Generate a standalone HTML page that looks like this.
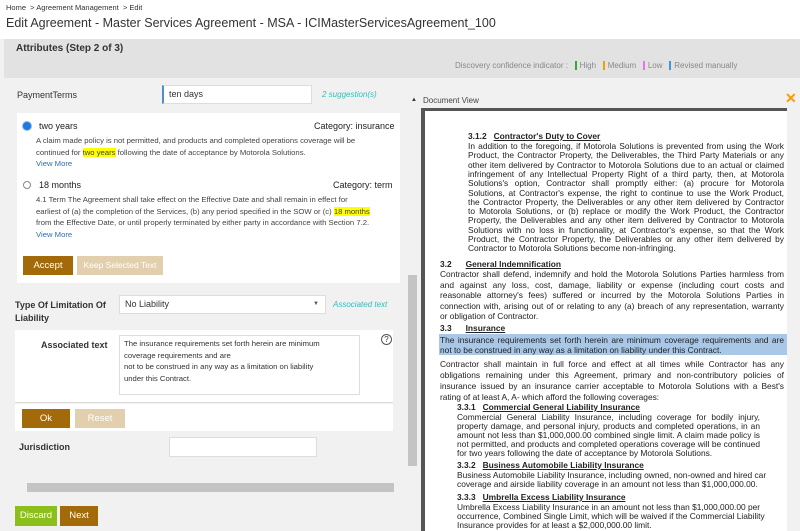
<!DOCTYPE html>
<html><head><style>
*{box-sizing:border-box;margin:0;padding:0}
html,body{width:800px;height:531px;overflow:hidden}
body{background:#f1f1f1;font-family:"Liberation Sans",sans-serif;color:#333;position:relative;font-size:10px}
.a{position:absolute}
.btn{position:absolute;color:#fff;font-size:9.5px;text-align:center;line-height:19px;height:19px}
.l{position:absolute;font-size:8.4px;line-height:10px;height:10px;color:#222;text-align:justify;text-align-last:justify;white-space:nowrap;overflow:visible}
.e{text-align-last:left}
.w1{left:468px;width:316px}
.w2{left:440px;width:344px}
.w3{left:457px;width:303px}
.hd{font-weight:bold;text-align-last:left}
.u{text-decoration:underline}
.hl{background:#ff0}
.s{white-space:nowrap;font-size:7.7px;line-height:11.7px;color:#444}
</style></head><body>
<div class="a" style="left:0;top:0;width:800px;height:39px;background:#fff"></div>
<div class="a" style="left:6px;top:3px;font-size:7.5px;color:#333">Home &nbsp;&gt; Agreement Management &nbsp;&gt; Edit</div>
<div class="a" style="left:6px;top:16px;font-size:12.5px;color:#333">Edit Agreement - Master Services Agreement - MSA - ICIMasterServicesAgreement_100</div>
<div class="a" style="left:4px;top:39px;width:796px;height:39px;background:#e2e2e2"></div>
<div class="a" style="left:16px;top:43px;font-size:10px;font-weight:bold;color:#333">Attributes (Step 2 of 3)</div>
<div class="a" style="left:455px;top:61px;font-size:8px;color:#888;white-space:nowrap">Discovery confidence indicator : &nbsp;&nbsp;<span style="border-left:2px solid #3a3;padding-left:3px">High</span> &nbsp;&nbsp;<span style="border-left:2px solid #f90;padding-left:3px">Medium</span> &nbsp;&nbsp;<span style="border-left:2px solid #f6f;padding-left:3px">Low</span> &nbsp;&nbsp;<span style="border-left:2px solid #39e;padding-left:3px">Revised manually</span></div>

<div class="a" style="left:17px;top:90px;font-size:9px;color:#333">PaymentTerms</div>
<div class="a" style="left:162px;top:85px;width:150px;height:19px;background:#fff;border:1px solid #ddd;border-left:2px solid #4a8fd0;font-size:9px;padding:3px 5px">ten days</div>
<div class="a" style="left:322px;top:90px;font-size:8px;color:#3bb;font-style:italic">2 suggestion(s)</div>

<div class="a" style="left:17px;top:113px;width:383px;height:170px;background:#fff"></div>
<div class="a" style="left:23px;top:122px;width:8px;height:8px;border-radius:50%;background:#1e7ae0;box-shadow:0 0 0 1px #9bd"></div>
<div class="a" style="left:39px;top:121px;font-size:9px;color:#222">two years</div>
<div class="a" style="left:314px;top:121px;font-size:9px;color:#222">Category: insurance</div>
<div class="a s" style="left:36px;top:135px">A claim made policy is not permitted, and products and completed operations coverage will be<br>continued for <span class="hl">two years</span> following the date of acceptance by Motorola Solutions.<br><span style="color:#2a6fb0">View More</span></div>
<div class="a" style="left:23px;top:181px;width:8px;height:8px;border-radius:50%;border:1px solid #888;background:#fff"></div>
<div class="a" style="left:39px;top:180px;font-size:9px;color:#222">18 months</div>
<div class="a" style="left:333px;top:180px;font-size:9px;color:#222">Category: term</div>
<div class="a s" style="left:36px;top:194px">4.1 Term The Agreement shall take effect on the Effective Date and shall remain in effect for<br>earliest of (a) the completion of the Services, (b) any period specified in the SOW or (c) <span class="hl">18 months</span><br>from the Effective Date, or until properly terminated by either party in accordance with Section 7.2.<br><span style="color:#2a6fb0">View More</span></div>
<div class="btn" style="left:23px;top:256px;width:50px;background:#a36a0a">Accept</div>
<div class="btn" style="left:77px;top:256px;width:86px;background:#e2cfae;font-size:8.5px">Keep Selected Text</div>

<div class="a" style="left:15px;top:299px;font-size:9px;font-weight:bold;color:#333;line-height:13px">Type Of Limitation Of<br>Liability</div>
<div class="a" style="left:119px;top:295px;width:207px;height:19px;background:#fff;border:1px solid #ddd;font-size:9px;padding:3px 5px">No Liability<span style="position:absolute;right:6px;top:5px;font-size:6px;color:#555">▼</span></div>
<div class="a" style="left:333px;top:300px;font-size:8px;color:#3bb;font-style:italic">Associated text</div>
<div class="a" style="left:15px;top:330px;width:378px;height:73px;background:#fff;border-bottom:1px solid #ddd"></div>
<div class="a" style="left:41px;top:340px;font-size:9px;font-weight:bold;color:#333">Associated text</div>
<div class="a s" style="left:119px;top:335px;width:241px;height:60px;background:#fff;border:1px solid #ddd;padding:2px 4px;color:#333">The insurance requirements set forth herein are minimum<br>coverage requirements and are<br>not to be construed in any way as a limitation on liability<br>under this Contract.</div>
<div class="a" style="left:381px;top:334px;width:11px;height:11px;border:1px solid #555;border-radius:50%;font-size:8px;text-align:center;line-height:9px;color:#333">?</div>
<div class="a" style="left:15px;top:404px;width:378px;height:27px;background:#fff"></div>
<div class="btn" style="left:22px;top:409px;width:48px;background:#a36a0a">Ok</div>
<div class="btn" style="left:75px;top:409px;width:50px;background:#e2cfae">Reset</div>
<div class="a" style="left:19px;top:442px;font-size:9px;font-weight:bold;color:#333">Jurisdiction</div>
<div class="a" style="left:169px;top:437px;width:148px;height:20px;background:#fff;border:1px solid #ddd"></div>
<div class="a" style="left:408px;top:275px;width:9px;height:191px;background:#c4c4c4"></div>
<div class="a" style="left:27px;top:483px;width:367px;height:9px;background:#c4c4c4"></div>
<div class="btn" style="left:15px;top:506px;width:42px;height:20px;background:#8cbf1a;line-height:20px">Discard</div>
<div class="btn" style="left:60px;top:506px;width:38px;height:20px;background:#a36a0a;line-height:20px">Next</div>

<div class="a" style="left:423px;top:96px;font-size:8px;color:#444">Document View</div>
<div class="a" style="left:411px;top:97px;font-size:6px;color:#333">▲</div>
<div class="a" style="left:785px;top:90px;font-size:14px;color:#f90;font-weight:bold">✕</div>
<div class="a" style="left:421px;top:108px;width:367px;height:423px;background:#555"></div>
<div class="a" style="left:425px;top:111px;width:362px;height:420px;background:#fff"></div>
<div class="a" style="left:787px;top:108px;width:13px;height:423px;background:#f1f1f1"></div>

<div class="l w1 hd" style="top:131px">3.1.2 &nbsp;&nbsp;<span class="u">Contractor's Duty to Cover</span></div>
<div class="l w1" style="top:141px">In addition to the foregoing, if Motorola Solutions is prevented from using the Work</div>
<div class="l w1" style="top:150.3px">Product, the Contractor Property, the Deliverables, the Third Party Materials or any</div>
<div class="l w1" style="top:159.6px">other item delivered by Contractor to Motorola Solutions due to an actual or claimed</div>
<div class="l w1" style="top:168.9px">infringement of any Intellectual Property Right of a third party, then, at Motorola</div>
<div class="l w1" style="top:178.2px">Solutions's option, Contractor shall promptly either: (a) procure for Motorola</div>
<div class="l w1" style="top:187.5px">Solutions, at Contractor's expense, the right to continue to use the Work Product,</div>
<div class="l w1" style="top:196.8px">the Contractor Property, the Deliverables or any other item delivered by Contractor</div>
<div class="l w1" style="top:206.1px">to Motorola Solutions, or (b) replace or modify the Work Product, the Contractor</div>
<div class="l w1" style="top:215.4px">Property, the Deliverables and any other item delivered by Contractor to Motorola</div>
<div class="l w1" style="top:224.7px">Solutions with no loss in functionality, at Contractor's expense, so that the Work</div>
<div class="l w1" style="top:234px">Product, the Contractor Property, the Deliverables or any other item delivered by</div>
<div class="l w1 e" style="top:243.3px">Contractor to Motorola Solutions become non-infringing.</div>

<div class="l w2 hd" style="top:259px">3.2 &nbsp;&nbsp;&nbsp;&nbsp;&nbsp;<span class="u">General Indemnification</span></div>
<div class="l w2" style="top:269px">Contractor shall defend, indemnify and hold the Motorola Solutions Parties harmless from</div>
<div class="l w2" style="top:279.5px">and against any loss, cost, damage, liability or expense (including court costs and</div>
<div class="l w2" style="top:290px">reasonable attorney's fees) suffered or incurred by the Motorola Solutions Parties in</div>
<div class="l w2" style="top:300.5px">connection with, arising out of or relating to any (a) breach of any representation, warranty</div>
<div class="l w2 e" style="top:311px">or obligation of Contractor.</div>

<div class="l w2 hd" style="top:323px">3.3 &nbsp;&nbsp;&nbsp;&nbsp;&nbsp;<span class="u">Insurance</span></div>
<div class="a" style="left:439px;top:334px;width:348px;height:21px;background:#a9c8e8"></div>
<div class="l w2" style="top:334.5px">The insurance requirements set forth herein are minimum coverage requirements and are</div>
<div class="l w2 e" style="top:344.5px">not to be construed in any way as a limitation on liability under this Contract.</div>
<div class="l w2" style="top:359px">Contractor shall maintain in full force and effect at all times while Contractor has any</div>
<div class="l w2" style="top:370px">obligations remaining under this Agreement, primary and non-contributory policies of</div>
<div class="l w2" style="top:381px">insurance issued by an insurance carrier acceptable to Motorola Solutions with a Best's</div>
<div class="l w2 e" style="top:392px">rating of at least A, A- which afford the following coverages:</div>

<div class="l w3 hd" style="top:402px">3.3.1 &nbsp;&nbsp;<span class="u">Commercial General Liability Insurance</span></div>
<div class="l w3" style="top:411.5px">Commercial General Liability Insurance, including coverage for bodily injury,</div>
<div class="l w3" style="top:420.5px">property damage, and personal injury, products and completed operations, in an</div>
<div class="l w3" style="top:429.5px">amount not less than $1,000,000.00 combined single limit. A claim made policy is</div>
<div class="l w3" style="top:438.5px">not permitted, and products and completed operations coverage will be continued</div>
<div class="l w3 e" style="top:447.5px">for two years following the date of acceptance by Motorola Solutions.</div>
<div class="l w3 hd" style="top:460px">3.3.2 &nbsp;&nbsp;<span class="u">Business Automobile Liability Insurance</span></div>
<div class="l w3" style="top:469.5px">Business Automobile Liability Insurance, including owned, non-owned and hired car</div>
<div class="l w3 e" style="top:478.5px">coverage and airside liability coverage in an amount not less than $1,000,000.00.</div>
<div class="l w3 hd" style="top:492px">3.3.3 &nbsp;&nbsp;<span class="u">Umbrella Excess Liability Insurance</span></div>
<div class="l w3" style="top:501.5px">Umbrella Excess Liability Insurance in an amount not less than $1,000,000.00 per</div>
<div class="l w3" style="top:510.5px">occurrence, Combined Single Limit, which will be waived if the Commercial Liability</div>
<div class="l w3 e" style="top:519.5px">Insurance provides for at least a $2,000,000.00 limit.</div>
</body></html>
